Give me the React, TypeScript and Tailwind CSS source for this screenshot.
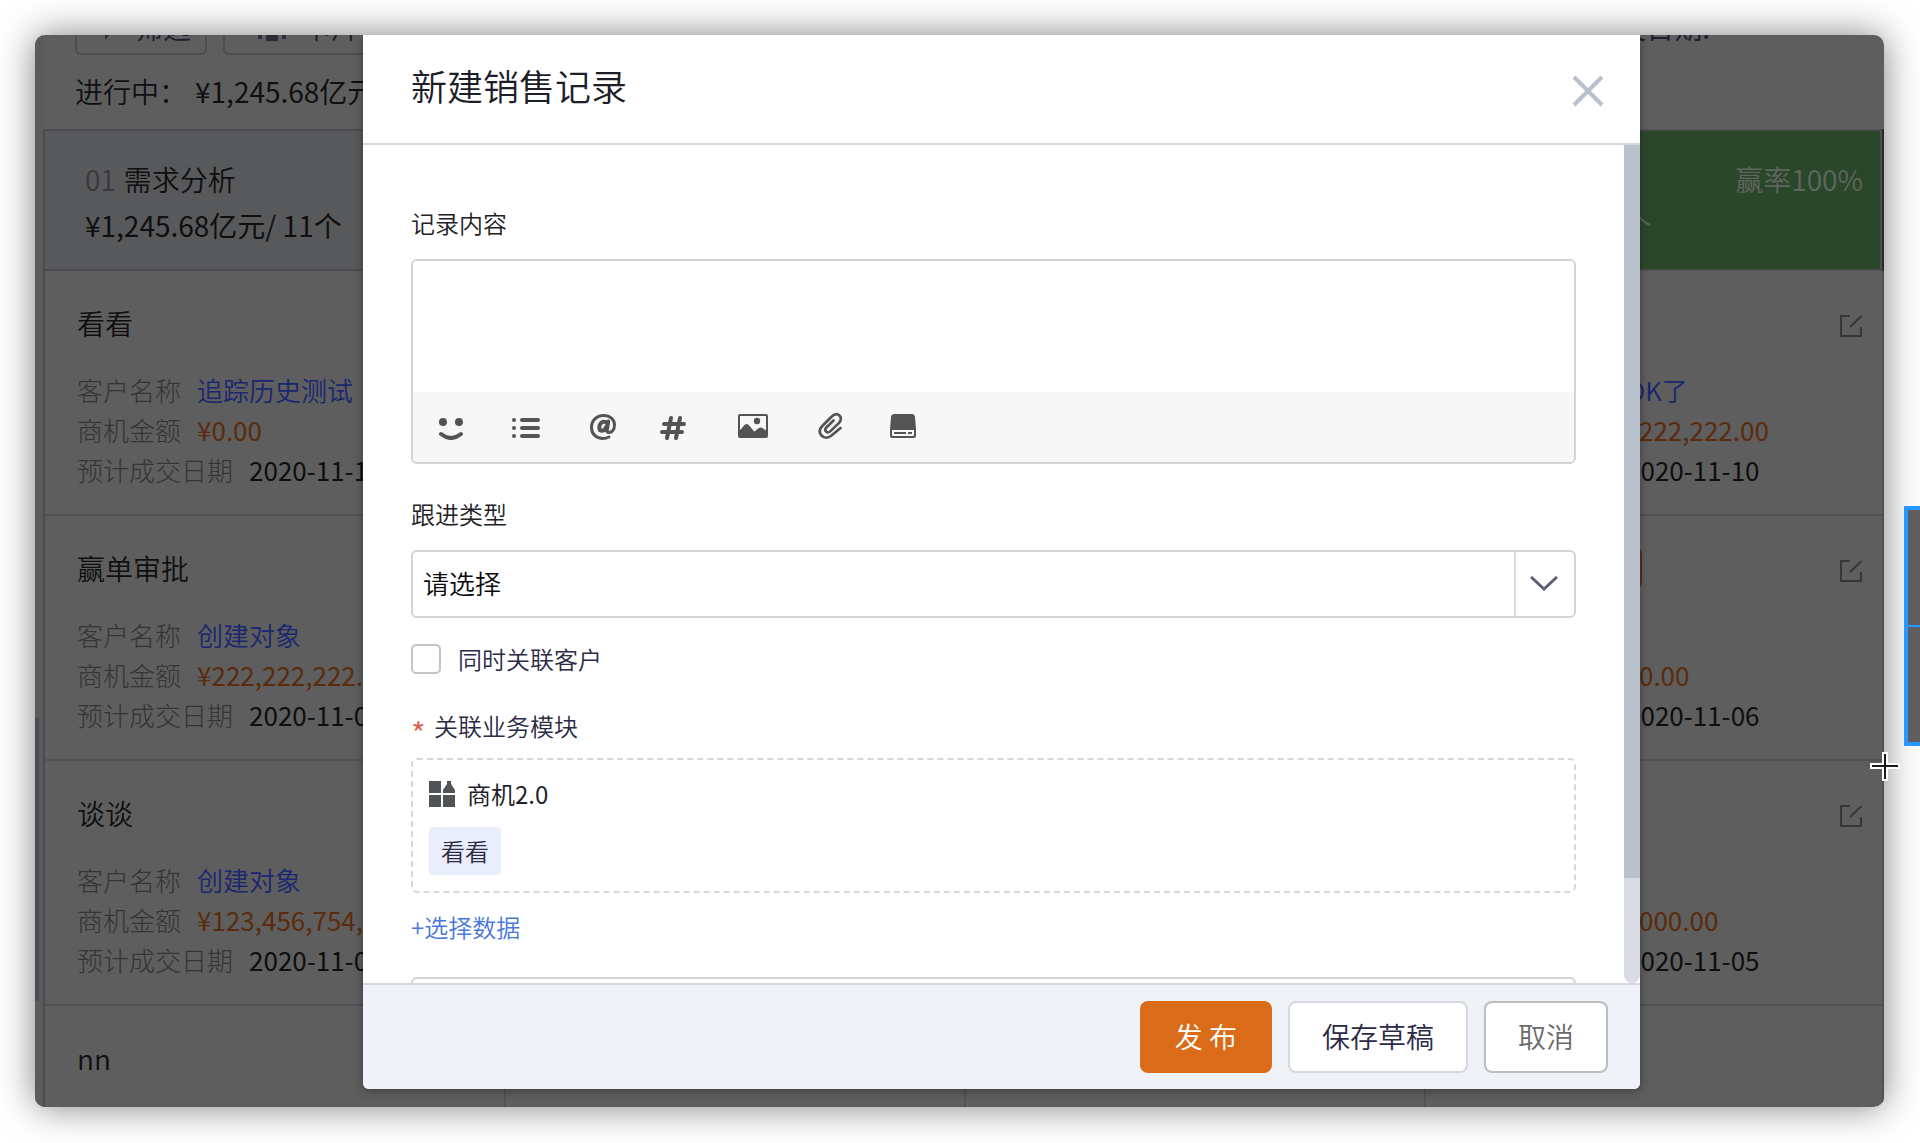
import { ReactNode } from "react";

interface CardType {
  title: string;
  customer: string;
  amount: string;
  date: string;
  tag?: string;
}

const firstColumn: CardType[] = [
  { title: "看看", customer: "追踪历史测试", amount: "¥0.00", date: "2020-11-10" },
  { title: "赢单审批", customer: "创建对象", amount: "¥222,222,222.00", date: "2020-11-06" },
  { title: "谈谈", customer: "创建对象", amount: "¥123,456,754,000", date: "2020-11-05" },
  { title: "nn", customer: "", amount: "", date: "" },
];

const lastColumn: CardType[] = [
  { title: "", customer: "测试OK了", amount: "¥222,222,222.00", date: "2020-11-10" },
  { title: "赢单审批", customer: "", amount: "¥2,000.00", date: "2020-11-06", tag: "赢单" },
  { title: "", customer: "", amount: "¥200,000.00", date: "2020-11-05" },
];

const EditIcon = () => (
  <svg width="22" height="22" viewBox="0 0 22 22" fill="none" stroke="#37373b" strokeWidth="2">
    <path d="M10 1H1v20h20v-9M10 12 21.500 1" />
  </svg>
);

const Card = ({ card, editable }: { card: CardType; editable?: boolean }) => (
  <div className="shrink-0 border-b-2 border-[#515156] pt-[31px] pb-6">
    <div className={editable ? "pl-7 pr-5" : "pl-8 pr-5"}>
      <div className="flex h-[42px] items-center gap-3 text-[28px] text-[#0f0f10]">
        <span className="whitespace-nowrap">{card.title}</span>
        {card.tag && (
          <span className="w-16 rounded bg-[#5c2f10] text-center text-[22px] leading-[38px] text-[#5e5e5e]">
            {card.tag}
          </span>
        )}
        {editable && (
          <button type="button" aria-label="编辑" className="ml-auto pt-1.5">
            <EditIcon />
          </button>
        )}
      </div>
      <dl className="mt-[26px] text-[26px] leading-10 whitespace-nowrap">
        <div className="flex h-10 gap-4">
          <dt className="font-light text-[#343434]">{card.date && "客户名称"}</dt>
          <dd>
            <a href="#" className="text-[#1a2670]">{card.customer}</a>
          </dd>
        </div>
        <div className="flex h-10 gap-4">
          <dt className="font-light text-[#343434]">{card.date && "商机金额"}</dt>
          <dd className="font-normal text-[#5a2b0c]">{card.amount}</dd>
        </div>
        <div className="flex h-10 gap-4">
          <dt className="font-light text-[#343434]">{card.date && "预计成交日期"}</dt>
          <dd className="font-normal text-[#0e0e0e]">{card.date}</dd>
        </div>
      </dl>
    </div>
  </div>
);

const Board = () => (
  <div className="flex h-full bg-[#5e5e5e]">
    <div className="w-2 shrink-0 bg-[#5b5b5b]">
      <div className="mt-[683px] h-[283px] w-1 bg-[#4c4c52]"></div>
    </div>
    <div className="flex min-w-0 flex-1 flex-col">
      <div className="-mt-9 flex h-14 shrink-0 items-center gap-4 pl-8 pr-[174px] text-[28px] text-[#1c1c2a]">
        <button type="button" className="flex h-14 w-[132px] shrink-0 items-center gap-4 rounded-md border-2 border-[#4d4d50] pl-6">
          <svg width="18" height="28" viewBox="0 0 18 28" fill="#2c2c3a" className="shrink-0">
            <path d="M0 0h18L12 17 4 27V17z" />
          </svg>
          <span className="shrink-0">筛选</span>
        </button>
        <button type="button" className="flex h-14 w-[220px] shrink-0 items-center gap-4 rounded-md border-2 border-[#4d4d50] pl-8">
          <svg width="30" height="28" viewBox="0 0 30 28" fill="#2c2c3a" className="shrink-0">
            <path d="M1 4h4v22H1zM9 2h12v26H9zM25 4h4v22h-4z" />
          </svg>
          <span className="shrink-0">卡片模式</span>
        </button>
        <span className="ml-auto font-normal">预计成交日期:</span>
      </div>
      <div className="flex h-[74px] shrink-0 items-center pb-[2px] pl-8 text-[28px] text-[#101012]">
        <span>进行中：</span>
        <span className="pl-2 font-normal">¥1,245.68亿元</span>
      </div>
      <div className="grid min-h-0 flex-1 grid-cols-[461fr_460fr_460fr_460fr] overflow-hidden">
        <div className="flex flex-col border-l-2 border-[#4b4b53]">
          <div className="h-[142px] shrink-0 border-y-2 border-[#4c4d52] bg-[#58595b] pt-[25px] pl-10 text-[28px] leading-[46px] text-[#0f0f10]">
            <p>
              <span className="pr-2 text-[#39393b]">01</span>需求分析
            </p>
            <p className="font-normal">¥1,245.68亿元/ 11个</p>
          </div>
          {firstColumn.map((card) => (
            <Card key={card.title} card={card} />
          ))}
        </div>
        <div className="border-l-2 border-[#515156]"></div>
        <div className="border-l-2 border-[#515156]"></div>
        <div className="flex flex-col border-l-2 border-[#515156]">
          <div className="flex h-[142px] shrink-0 bg-[#2b2b30]">
            <div className="mr-[2px] flex-1 border-y-2 border-r-2 border-[#4e4e52] bg-[#2b472a] pt-[25px] pl-10 pr-[17px] text-[28px] leading-[46px] text-[#5f665f]">
              <p className="flex justify-end">赢率100%</p>
              <p>¥5.78亿元/ 3个</p>
            </div>
          </div>
          <div className="flex-1 border-r-2 border-[#515156]">
            {lastColumn.map((card) => (
              <Card key={card.date} card={card} editable />
            ))}
          </div>
        </div>
      </div>
    </div>
  </div>
);

const ToolButton = ({ label, width, children }: { label: string; width: number; children: ReactNode }) => (
  <button type="button" aria-label={label} className="text-[#545454]">
    <svg width={width} height="28" viewBox={`0 0 ${width} 28`} fill="currentColor">
      {children}
    </svg>
  </button>
);

const EditorToolbar = () => (
  <div className="flex h-[70px] items-start gap-11 bg-[#f7f7f7] pt-5 pl-[26px]">
    <ToolButton label="表情" width={29}>
      <circle cx="4" cy="10" r="4" />
      <circle cx="20" cy="10" r="4" />
      <path d="M2 22q10 8 20 0" fill="none" stroke="currentColor" strokeWidth="4" strokeLinecap="round" />
    </ToolButton>
    <ToolButton label="列表" width={34}>
      <circle cx="2" cy="8" r="2" />
      <circle cx="2" cy="16" r="2" />
      <circle cx="2" cy="24" r="2" />
      <path d="M10 8h16M10 16h16M10 24h16" stroke="currentColor" strokeWidth="4" strokeLinecap="round" />
    </ToolButton>
    <ToolButton label="提到" width={26}>
      <g fill="none" stroke="currentColor" strokeLinecap="round">
        <path d="M19 25c-2 1-4 1.400-6 1.400C6 26.400 1.500 22 1.500 15.500 1.500 8.500 6.500 3.500 13.500 3.500c6.500 0 11 4 11 9.600 0 4.600-2.700 7.400-5.500 7.400-1.800 0-2.400-1.200-2-3" strokeWidth="3" />
        <path d="M18.200 9.500 16.800 18.500" strokeWidth="4" />
        <path d="M17 11c-1-1.200-2.300-1.500-3.500-1.300-2.500.4-4.200 3-4.200 5.900 0 2.200 1.200 3.300 2.700 3.200 2-.1 3.800-1.800 4.300-4" strokeWidth="4" />
      </g>
    </ToolButton>
    <ToolButton label="话题" width={34}>
      <path d="M11 6 7 26M20 6l-4 20M4 12h20M2 20h20" fill="none" stroke="currentColor" strokeWidth="4" strokeLinecap="round" />
    </ToolButton>
    <ToolButton label="图片" width={36}>
      <rect x="1" y="3" width="28" height="22" rx="1" fill="none" stroke="currentColor" strokeWidth="2" />
      <circle cx="19" cy="9" r="3.200" />
      <path d="M1 19c3-2 5-7 7.500-7s5 5 8 7.500c2-1.500 4-4 6-4s4 2 6.500 4V25H1z" />
    </ToolButton>
    <ToolButton label="附件" width={28}>
      <path
        d="M22.500 16 13.500 23.500c-3.500 3-7.500 2.600-10 0-2.600-2.900-2.200-6.500 1-9.700l9.300-9.300c2.600-2.700 5.500-3 7.600-1 2.200 2.200 1.900 5.100-.6 7.600l-8.300 8c-1.600 1.500-3.300 1.600-4.400.5-1.200-1.200-1-2.900.5-4.400l6.900-6.700"
        fill="none"
        stroke="currentColor"
        strokeWidth="2.700"
        strokeLinecap="round"
      />
    </ToolButton>
    <ToolButton label="网盘" width={26}>
      <path fillRule="evenodd" d="M4 2h18q2.500 0 3 3l1 12v6.500q0 2.500-2.500 2.500h-21Q0 26 0 23.500V17L1 5q.5-3 3-3zM2 18v5q0 1 1 1h20q1 0 1-1v-5z" />
      <path d="M4 20h12v2H4zM18 20h4v2h-4z" />
    </ToolButton>
  </div>
);

const ModalForm = () => (
  <form id="record" className="min-w-0 flex-1 overflow-hidden px-12 pt-[60px] text-2xl leading-9 text-[#2b2b45]">
    <label htmlFor="content" className="block text-[#222226]">
      记录内容
    </label>
    <div className="mt-[18px] overflow-hidden rounded-md border-2 border-[#d3d3d3]">
      <textarea id="content" className="block h-[131px] w-full resize-none bg-white p-3 outline-none"></textarea>
      <EditorToolbar />
    </div>

    <label htmlFor="type" className="mt-8 block text-[#222226]">
      跟进类型
    </label>
    <div className="relative mt-[18px]">
      <select id="type" className="block h-[68px] w-full appearance-none rounded-md border-2 border-[#d3d3d3] bg-white pb-[2px] pl-[10px] text-[26px] text-[#0c0c0c]">
        <option>请选择</option>
      </select>
      <div className="pointer-events-none absolute inset-y-[2px] right-[2px] flex w-[60px] items-center justify-center border-l-2 border-[#d8d9e2] pr-[2px]">
        <svg width="28" height="16" viewBox="0 0 28 16" fill="none" stroke="#5d6072" strokeWidth="3">
          <path d="M1 1l13 12L27 1" />
        </svg>
      </div>
    </div>

    <div className="mt-[26px] flex h-[30px] items-center gap-[17px]">
      <input id="link" type="checkbox" className="size-[30px] shrink-0 appearance-none rounded-[5px] border-2 border-[#c4c4c4] bg-white" />
      <label htmlFor="link">同时关联客户</label>
    </div>

    <p className="mt-[34px] flex h-10 gap-2">
      <span className="w-[15px] pt-1.5 text-[32px] text-[#e0604f]">*</span>
      关联业务模块
    </p>
    <div className="mt-[10px] rounded-md border-2 border-dashed border-[#d7d7e0] px-4 pt-[21px] pb-4">
      <div className="flex h-[26px] items-center gap-3 leading-[26px] font-normal text-[#1f1f2b]">
        <svg width="26" height="26" viewBox="0 0 26 26" fill="#505457">
          <path d="M0 0h12v12H0zM0 14h12v12H0zM14 14h12v12H14zM18 0h4v3l2 3 2 3v3H14V9l2-3 2-3z" />
        </svg>
        商机2.0
      </div>
      <span className="mt-5 flex h-12 w-fit items-center rounded bg-[#eaeefc] px-3">看看</span>
    </div>
    <button type="button" className="mt-4 block text-[#4a77dc]">
      +选择数据
    </button>
    <div className="mt-8 h-20 rounded-md border-2 border-[#d3d3d3]"></div>
  </form>
);

const Modal = () => (
  <div className="flex min-w-0 flex-1 flex-col rounded-b-md bg-white shadow-[0_2px_10px_rgba(0,0,0,0.35)]">
    <header className="flex h-[110px] shrink-0 items-center justify-between border-b-2 border-[#d6d6de] pb-2 pl-12 pr-9">
      <h2 className="text-4xl text-[#1d1e29]">新建销售记录</h2>
      <button type="button" aria-label="关闭" className="pt-3">
        <svg width="32" height="32" viewBox="0 0 32 32" stroke="#b8c0cd" strokeWidth="4">
          <path d="M2 2l28 28M30 2L2 30" />
        </svg>
      </button>
    </header>
    <div className="flex min-h-0 flex-1">
      <ModalForm />
      <div className="flex w-4 shrink-0 flex-col rounded-b-full bg-[#d8dbe4]">
        <div className="h-7/8 bg-[#b9c1cc]"></div>
      </div>
    </div>
    <footer className="flex shrink-0 justify-end gap-4 rounded-b-md border-t-2 border-[#d6d6de] bg-[#eff3f8] px-8 py-4 text-[28px]">
      <button type="submit" form="record" className="h-[72px] rounded-lg border-2 border-[#d96b19] bg-[#d96b19] px-[33px] pb-[2px] text-white">
        发 布
      </button>
      <button type="button" className="h-[72px] rounded-lg border-2 border-[#d6d7e1] bg-white px-8 pb-[2px] text-[#2b2b45]">
        保存草稿
      </button>
      <button type="button" className="h-[72px] rounded-lg border-2 border-[#bdbdbd] bg-white px-8 pb-[2px] text-[#6b6b6b]">
        取消
      </button>
    </footer>
  </div>
);

// screen capture selection sticking out from the right edge, plus its cursor
const CaptureOverlay = () => (
  <>
    <div className="absolute top-[506px] right-0 flex h-[240px] w-4 flex-col border-4 border-r-0 border-[#2698ff] bg-[#5e5e5e]">
      <div className="flex-1 border-b-2 border-[#2698ff]"></div>
      <div className="flex-1"></div>
    </div>
    <svg className="absolute top-[752px] right-5" width="30" height="29" viewBox="0 0 30 29">
      <path d="M12 0h6v11h12v6H18v12h-6V17H0v-6h12z" fill="#fff" />
      <path d="M14 2h2v11h12v2H16v12h-2V15H2v-2h12z" fill="#1a1a1a" />
    </svg>
  </>
);

const App = () => {
  return (
    <main
      className="relative h-screen overflow-hidden bg-white pt-[35px] pr-9 pb-9 pl-[35px] font-[350]"
      style={{ fontFamily: '"Noto Sans CJK SC", sans-serif' }}
    >
      <div className="h-full rounded-[10px] shadow-[0_0_36px_rgba(0,0,0,0.5)]">
        <div className="relative h-full overflow-hidden rounded-[10px]">
          <Board />
          <div className="absolute inset-0 flex pr-[244px] pb-[18px] pl-[328px]">
            <Modal />
          </div>
        </div>
      </div>
      <CaptureOverlay />
    </main>
  );
};

export default App;
